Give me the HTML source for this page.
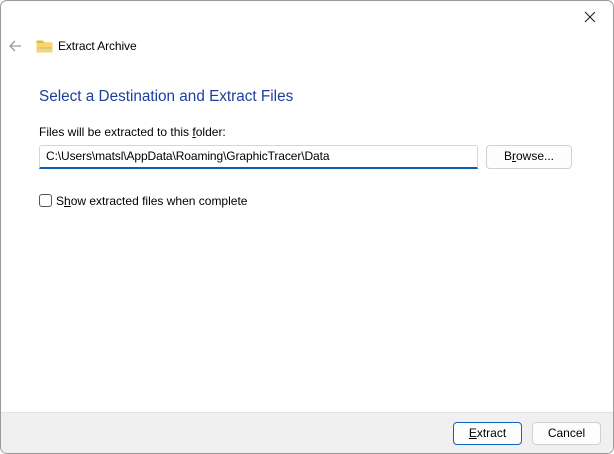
<!DOCTYPE html>
<html><head><style>
body{margin:0;width:614px;height:454px;background:#fff;font-family:"Liberation Sans",sans-serif;font-size:12px;color:#000;position:relative;overflow:hidden}
.win{position:absolute;left:0;top:0;width:612px;height:452px;border:1px solid #9a9a9a;border-radius:7px;background:#fff;overflow:hidden}
.abs{position:absolute}
.btn{position:absolute;border:1px solid #d0d0d0;border-radius:4px;background:#fdfdfd;text-align:center;line-height:21px;font-size:12px}
u{text-decoration:underline}
</style></head><body>
<div class="win">
<svg class="abs" style="left:583px;top:10px" width="12" height="12"><path d="M1 1L11 11M11 1L1 11" stroke="#222" stroke-width="1.1"/></svg>
<svg class="abs" style="left:7px;top:39px" width="14" height="12"><path d="M13 6H2M7 1L2 6L7 11" stroke="#9a9a9a" stroke-width="1.3" fill="none"/></svg>
<svg class="abs" style="left:35px;top:37px" width="17" height="15"><path d="M0.5 2.5h6l2 2h8v10h-16z" fill="#e8b63c"/><rect x="0.5" y="5" width="16" height="9.5" fill="#f7d66b"/><path d="M2 10h13" stroke="#999" stroke-dasharray="1 1"/></svg>
<div class="abs" style="left:57px;top:38px;font-size:12px;letter-spacing:-0.1px">Extract Archive</div>
<div class="abs" style="left:38px;top:87px;font-size:15.3px;color:#1c3f9e">Select a Destination and Extract Files</div>
<div class="abs" style="left:38px;top:124px">Files will be extracted to this <u>f</u>older:</div>
<div class="abs" style="left:38px;top:144px;height:21px;border:1px solid #d6d6d6;border-bottom:2px solid #0a5fb4;border-radius:3px 3px 0 0;line-height:21px;padding-left:6px;width:431px;letter-spacing:-0.1px">C:\Users\matsl\AppData\Roaming\GraphicTracer\Data</div>
<div class="btn" style="left:485px;top:144px;width:84px;height:22px">B<u>r</u>owse...</div>
<div class="abs" style="left:38px;top:193px;width:11px;height:11px;border:1px solid #555;border-radius:3px"></div>
<div class="abs" style="left:55px;top:193px">S<u>h</u>ow extracted files when complete</div>
<div class="abs" style="left:0;top:411px;width:612px;height:41px;background:#f0f0f0;border-top:1px solid #e3e3e3"></div>
<div class="btn" style="left:452px;top:421px;width:67px;height:21px;border-color:#0a64c2;background:#fdfdfd"><u>E</u>xtract</div>
<div class="btn" style="left:531px;top:421px;width:67px;height:21px">Cancel</div>
</div>
</body></html>
